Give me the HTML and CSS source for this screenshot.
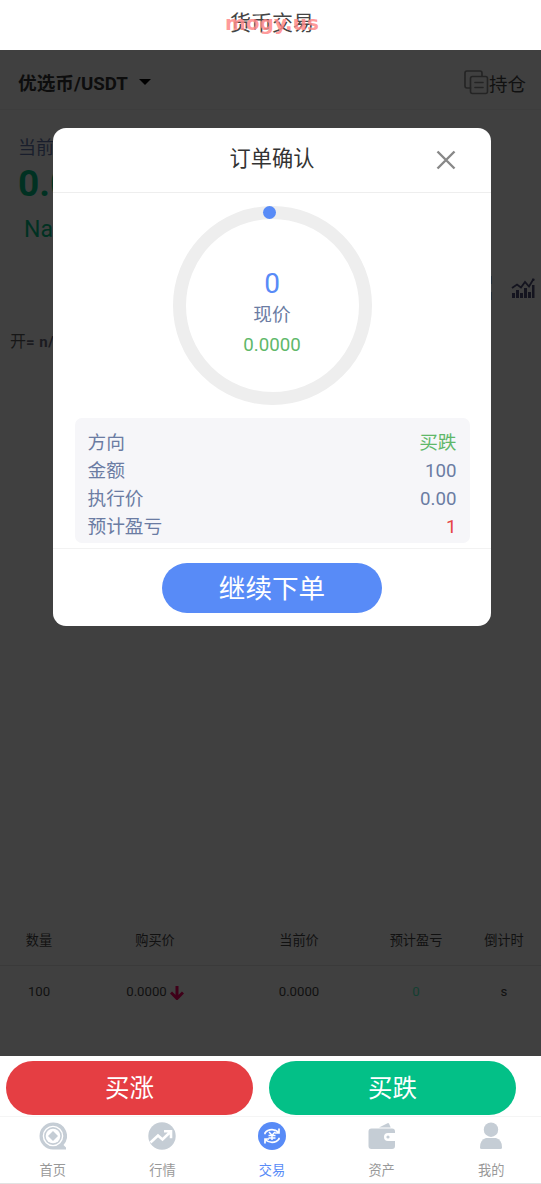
FILE: index.html
```html
<!DOCTYPE html>
<html lang="zh-CN">
<head>
<meta charset="utf-8">
<title>货币交易</title>
<link rel="stylesheet" href="styles.css">
</head>
<body>
<div class="app">
  <header class="header"><h1 class="title">货币交易</h1><span class="mark">mogy.us</span></header>
  <main class="market">
    <div class="pair-row">
      <div class="pair">优选币/USDT<span class="caret"></span></div>
      <div class="hold">
        <svg width="25" height="25" viewBox="0 0 25 25" fill="none" stroke="#242424" stroke-width="1.6" stroke-linecap="round"><path d="M6.5 18H3Q1 18 1 16V3Q1 1 3 1H16Q18 1 18 3V6"/><rect x="6.5" y="6.5" width="17" height="17" rx="2"/><path d="M11 12.5h8M11 17.5h8"/></svg>
        <span>持仓</span>
      </div>
    </div>
    <div class="quote">
      <div class="quote-label">当前价</div>
      <div class="quote-price">0.0000</div>
      <div class="quote-change">NaN%</div>
    </div>
    <div class="tools">
      <svg width="24" height="24" viewBox="0 0 24 24" fill="none" stroke="#25303a" stroke-width="2"><path d="M1 8V1h22v7M1 16v7h22v-7"/></svg>
      <svg width="24" height="21" viewBox="0 0 24 21" fill="#14141f"><path d="M1 15h3v5H1zM5 12h3v8H5zM9 15h3v5H9zM13 10h3v10h-3zM17 14h3v6h-3zM21 7h2.5v13H21z"/><path d="M1 10l5-3.5 4 3L14 4l4 4.5L22.5 1" fill="none" stroke="#14141f" stroke-width="1.8"/><circle cx="22.3" cy="1.8" r="1.3"/></svg>
    </div>
    <div class="ohlc">开<b>= n/a</b></div>
    <div class="orders">
      <div class="order-row order-head"><span>数量</span><span>购买价</span><span>当前价</span><span>预计盈亏</span><span>倒计时</span></div>
      <div class="order-row order-line"><span>100</span><span class="buy">0.0000<svg width="14" height="14" viewBox="0 0 14 14" fill="none" stroke="#3f0019" stroke-width="3"><path d="M7 0v12M1 6.5l6 6 6-6"/></svg></span><span>0.0000</span><span class="profit">0</span><span>s</span></div>
    </div>
  </main>
  <div class="actions"><button class="action rise">买涨</button><button class="action fall">买跌</button></div>
  <nav class="tabs">
    <div class="tab"><svg width="28" height="28" viewBox="0 0 28 28"><path d="M14 .5a13.5 13.5 0 1 0 0 27H27V25.5L24.5 23A13.5 13.5 0 0 0 14 .5z" fill="#c5cdd5"/><circle cx="14" cy="14" r="9.6" fill="none" stroke="#fff" stroke-width="1.400"/><circle cx="14" cy="14" r="7.300" fill="#fff"/><path d="M14 9l5 5-5 5-5-5z" fill="#c5cdd5"/></svg><span>首页</span></div>
    <div class="tab"><svg width="28" height="28" viewBox="0 0 28 28"><circle cx="14" cy="14" r="13.7" fill="#c5cdd5"/><path d="M2.5 20.5L10 13.5l4.5 4 7.5-7.3M16 9.3h7v7" fill="none" stroke="#fff" stroke-width="2.6"/></svg><span>行情</span></div>
    <div class="tab active"><svg width="28" height="28" viewBox="0 0 28 28"><circle cx="14" cy="14" r="14" fill="#588bf7"/><g fill="none" stroke="#fff" stroke-width="1.7"><path d="M7 12.2V11q2.3-3.3 7-3.3 3.5 0 7 2.7M21 6.5V11h-4M21 15.8V17q-2.3 3.3-7 3.3-3.5 0-7-2.7M7 21.5V17h4"/><path d="M11 10l3 3.2 3-3.2M14 13v5M10.5 13.5h7M10.5 16h7" stroke-width="1.5"/></g></svg><span>交易</span></div>
    <div class="tab"><svg width="28" height="28" viewBox="0 0 28 28" fill="#c5cdd5"><path d="M11 5.5L19.5 1.2q1-.5 1.6.5L22.7 5.5z"/><path d="M3.5 6.5H24q3 0 3 3V11h-7a3.5 3.5 0 0 0 0 8h7v5q0 3-3 3H3.500Q.5 27 .5 24V9.500Q.5 6.500 3.500 6.500z"/><circle cx="20" cy="15" r="1.6"/></svg><span>资产</span></div>
    <div class="tab"><svg width="28" height="28" viewBox="0 0 28 28" fill="#c5cdd5"><circle cx="14" cy="7.700" r="7.2"/><path d="M9 16h10q6 1.500 6 9.500 0 1.500-1.500 1.500h-19Q3 27 3 25.500 3 17.500 9 16z"/></svg><span>我的</span></div>
  </nav>
  <section class="dialog">
    <div class="dialog-head"><h2 class="dialog-title">订单确认</h2><svg class="close" width="20" height="20" viewBox="0 0 20 20"><path d="M1.500 1.500l17 17M18.500 1.500l-17 17" stroke="#888" stroke-width="2.400"/></svg></div>
    <div class="dialog-body">
      <div class="ring"><i class="ring-dot"></i><span class="count">0</span><span class="now-label">现价</span><span class="now">0.0000</span></div>
      <dl class="details">
        <div class="detail"><dt>方向</dt><dd class="up">买跌</dd></div>
        <div class="detail"><dt>金额</dt><dd>100</dd></div>
        <div class="detail"><dt>执行价</dt><dd>0.00</dd></div>
        <div class="detail"><dt>预计盈亏</dt><dd class="down">1</dd></div>
      </dl>
    </div>
    <div class="dialog-foot"><button class="confirm">继续下单</button></div>
  </section>
</div>
</body>
</html>
```
FILE: styles.css
```css
* { box-sizing: border-box; }
body { margin: 0; font-family: Roboto, "Noto Sans CJK SC", sans-serif; font-weight: 400; }
h1, h2, dl, dd { margin: 0; font-weight: 400; }
button { border: 0; padding: 0; font-family: inherit; color: #fff; }
svg { display: block; flex: none; }
.app { position: relative; width: 541px; height: 1184px; overflow: hidden; display: flex; flex-direction: column; background: #fff; }
.header { position: relative; height: 50px; flex: none; text-align: center; padding-left: 3px; }
.title { font-size: 21px; line-height: 46px; color: #444; }
.mark { position: absolute; left: 225px; top: 11px; font: bold 20px/24px "DejaVu Sans", sans-serif; color: #ff8888dd; }
.market { height: 1006px; flex: none; display: flex; flex-direction: column; background: #404040; color: #111; }
.pair-row { height: 60px; flex: none; display: flex; justify-content: space-between; align-items: center; padding: 6px 15px 0 18px; border-bottom: 1px solid #3d3d3d; }
.pair { display: flex; align-items: center; padding-bottom: 2px; font-size: 18.700px; font-weight: bold; color: #0d0d0d; }
.caret { margin-left: 11px; border: 6px solid transparent; border-top-color: #000; border-bottom: 0; }
.hold { display: flex; align-items: center; font-size: 18.500px; }
.quote { height: 160px; flex: none; padding: 23px 0 0 18px; }
.quote-label { height: 29px; font-size: 18px; line-height: 29px; color: #191e2c; }
.quote-price { height: 44px; font-size: 37px; line-height: 44px; font-weight: bold; color: #003122; }
.quote-change { padding-left: 6px; font-size: 23px; line-height: 47px; color: #003122; }
.tools { height: 50px; flex: none; display: flex; justify-content: flex-end; gap: 19px; padding: 6px 6px 0 0; }
.tools svg:last-child { margin-top: 2px; }
.ohlc { padding-left: 10px; font-size: 16px; line-height: 44px; color: #171717; }
.ohlc b { font-size: 15px; color: #1b1b20; letter-spacing: .5px; }
.orders { margin-top: auto; height: 141px; font-size: 13.200px; color: #111; }
.order-row { display: grid; grid-template-columns: 78px 154px 134px 100px 76px; align-items: center; text-align: center; }
.order-head { height: 51px; padding-bottom: 2px; border-bottom: 1px solid #3a3a3a; }
.order-line { height: 50px; }
.buy { display: flex; justify-content: center; align-items: center; gap: 3px; }
.buy svg { margin-top: 4px; }
.profit { color: #143f32; }
.actions { height: 61px; flex: none; display: flex; gap: 16px; padding: 5px 0 0 6px; border-bottom: 1px solid #f5f5f5; }
.action { width: 247px; height: 54px; border-radius: 27px; padding-bottom: 4px; font-size: 24.500px; font-weight: 400; }
.rise { background: #e53e43; }
.fall { background: #03c087; }
.tabs { height: 67px; display: grid; grid-template-columns: repeat(5, 109.600px); border-bottom: 1px solid #e2e2e2; }
.tab { display: flex; flex-direction: column; align-items: center; padding: 5px 4px 0 0; color: #999; font-size: 13.200px; line-height: 20px; gap: 11px; }
.tab.active { color: #588bf7; }
.dialog { position: absolute; left: 53px; top: 128px; width: 438px; height: 498px; border-radius: 13px; background: #fff; overflow: hidden; display: flex; flex-direction: column; }
.dialog-head { height: 65px; flex: none; display: grid; grid-template-columns: 1fr 130px 1fr; align-items: center; border-bottom: 1px solid #eee; }
.dialog-title { grid-column: 2; text-align: center; font-size: 21.200px; line-height: 30px; color: #333; padding-bottom: 2px; }
.close { justify-self: end; margin-right: 35px; }
.dialog-body { flex: 1; display: flex; flex-direction: column; align-items: center; padding-top: 13px; }
.ring { position: relative; width: 199px; height: 199px; flex: none; border: 13px solid #eee; border-radius: 50%; display: flex; flex-direction: column; align-items: center; padding-top: 48px; }
.ring-dot { position: absolute; left: 77px; top: -13px; width: 13px; height: 13px; border-radius: 50%; background: #588bf7; }
.count { font-size: 28px; line-height: 34px; color: #588bf7; }
.now-label { font-size: 18.700px; line-height: 28px; color: #6b7ca3; }
.now { font-size: 18.700px; line-height: 32px; color: #5fb86a; }
.details { width: 395px; height: 125px; margin-top: 13px; padding: 11px 13px 0; border-radius: 7px; background: #f6f6f9; }
.detail { display: flex; justify-content: space-between; font-size: 18.700px; line-height: 28px; color: #6b7ca3; }
.detail .up { color: #5fb86a; }
.detail .down { color: #e64545; }
.dialog-foot { height: 78px; flex: none; border-top: 1px solid #f2f2f2; padding-top: 14px; text-align: center; }
.confirm { width: 220px; height: 50px; border-radius: 25px; padding-bottom: 3px; background: #588bf7; font-size: 26.600px; font-weight: 400; }
```
